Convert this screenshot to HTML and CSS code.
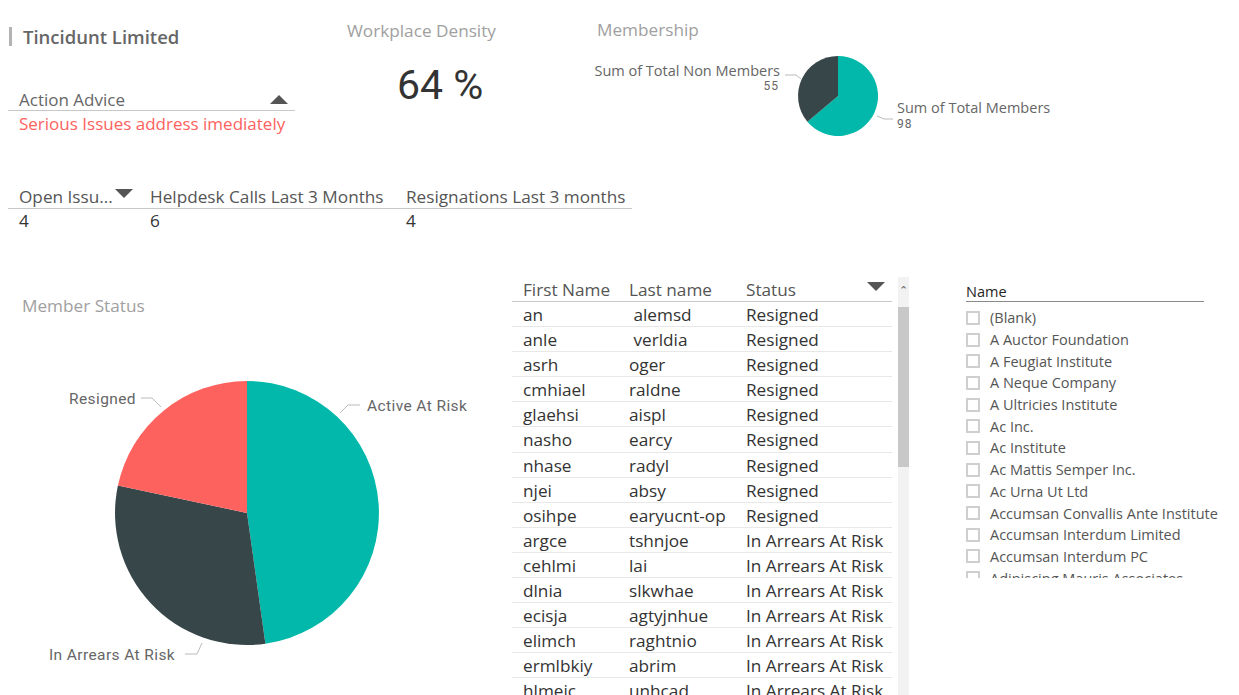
FILE: index.html
```html
<!DOCTYPE html>
<html lang="en">
<head>
    <meta charset="UTF-8">
    <title>Tincidunt Limited - Report</title>
    <link rel="stylesheet" href="styles.css">
</head>
<body>
    <div class="top">
        <div class="company">
            <div class="company-title">Tincidunt Limited</div>
            <div class="advice">
                <div class="advice-head">
                    <span>Action Advice</span>
                    <span class="tri-up"></span>
                </div>
                <div class="advice-value">Serious Issues address imediately</div>
            </div>
        </div>

        <div class="density">
            <div class="visual-title">Workplace Density</div>
            <div class="density-value">64 %</div>
        </div>

        <div class="membership">
            <div class="visual-title">Membership</div>
            <svg class="membership-chart" width="500" height="95" viewBox="0 0 500 95">
                <path d="M258,46 L258,6 A40,40 0 1 1 227.4,71.7 Z" fill="#01b8aa"/>
                <path d="M258,46 L227.4,71.7 A40,40 0 0 1 258,6 Z" fill="#374649"/>
                <polyline points="205,25 216,25 221,29" fill="none" stroke="#bbb" stroke-width="1"/>
                <polyline points="297,66 304,69 313,69" fill="none" stroke="#bbb" stroke-width="1"/>
                <text x="200" y="26" text-anchor="end" class="pie-label">Sum of Total Non Members</text>
                <text x="199" y="40" text-anchor="end" class="pie-num">55</text>
                <text x="317" y="63" class="pie-label">Sum of Total Members</text>
                <text x="317" y="78" class="pie-num">98</text>
            </svg>
        </div>
    </div>

    <div class="kpi">
        <div class="kpi-row kpi-head">
            <div class="kpi-cell first">Open Issu...<span class="tri-down"></span></div>
            <div class="kpi-cell">Helpdesk Calls Last 3 Months</div>
            <div class="kpi-cell">Resignations Last 3 months</div>
        </div>
        <div class="kpi-row kpi-values">
            <div class="kpi-cell first">4</div>
            <div class="kpi-cell">6</div>
            <div class="kpi-cell">4</div>
        </div>
    </div>

    <div class="bottom">
        <div class="status">
            <div class="visual-title">Member Status</div>
            <svg class="status-chart" width="490" height="300" viewBox="0 0 490 300">
                <path d="M247,143 L247,11 A132,132 0 0 1 265.4,273.7 Z" fill="#01b8aa"/>
                <path d="M247,143 L265.4,273.7 A132,132 0 0 1 117.9,115.6 Z" fill="#374649"/>
                <path d="M247,143 L117.9,115.6 A132,132 0 0 1 247,11 Z" fill="#fd625e"/>
                <polyline points="141,28 152,28 161,37" fill="none" stroke="#bbb" stroke-width="1"/>
                <polyline points="340,43 348,35 360,35" fill="none" stroke="#bbb" stroke-width="1"/>
                <polyline points="185,284 197,284 202,273" fill="none" stroke="#bbb" stroke-width="1"/>
                <text x="136" y="34" text-anchor="end" class="status-label">Resigned</text>
                <text x="367" y="41" class="status-label">Active At Risk</text>
                <text x="49" y="290" class="status-label">In Arrears At Risk</text>
            </svg>
        </div>

        <div class="grid">
            <div class="grid-row grid-head">
                <div>First Name</div>
                <div>Last name</div>
                <div class="status-col">Status<span class="tri-down"></span></div>
            </div>
            <div class="grid-row"><div>an</div><div>&nbsp;alemsd</div><div>Resigned</div></div>
            <div class="grid-row"><div>anle</div><div>&nbsp;verldia</div><div>Resigned</div></div>
            <div class="grid-row"><div>asrh</div><div>oger</div><div>Resigned</div></div>
            <div class="grid-row"><div>cmhiael</div><div>raldne</div><div>Resigned</div></div>
            <div class="grid-row"><div>glaehsi</div><div>aispl</div><div>Resigned</div></div>
            <div class="grid-row"><div>nasho</div><div>earcy</div><div>Resigned</div></div>
            <div class="grid-row"><div>nhase</div><div>radyl</div><div>Resigned</div></div>
            <div class="grid-row"><div>njei</div><div>absy</div><div>Resigned</div></div>
            <div class="grid-row"><div>osihpe</div><div>earyucnt-op</div><div>Resigned</div></div>
            <div class="grid-row"><div>argce</div><div>tshnjoe</div><div>In Arrears At Risk</div></div>
            <div class="grid-row"><div>cehlmi</div><div>lai</div><div>In Arrears At Risk</div></div>
            <div class="grid-row"><div>dlnia</div><div>slkwhae</div><div>In Arrears At Risk</div></div>
            <div class="grid-row"><div>ecisja</div><div>agtyjnhue</div><div>In Arrears At Risk</div></div>
            <div class="grid-row"><div>elimch</div><div>raghtnio</div><div>In Arrears At Risk</div></div>
            <div class="grid-row"><div>ermlbkiy</div><div>abrim</div><div>In Arrears At Risk</div></div>
            <div class="grid-row"><div>hlmeic</div><div>unhcad</div><div>In Arrears At Risk</div></div>
        </div>

        <div class="scrollbar">
            <div class="scroll-up">&#8963;</div>
            <div class="scroll-thumb"></div>
        </div>

        <div class="slicer">
            <div class="slicer-head">Name</div>
            <div class="slicer-list">
                <div class="slicer-item"><span class="box"></span>(Blank)</div>
                <div class="slicer-item"><span class="box"></span>A Auctor Foundation</div>
                <div class="slicer-item"><span class="box"></span>A Feugiat Institute</div>
                <div class="slicer-item"><span class="box"></span>A Neque Company</div>
                <div class="slicer-item"><span class="box"></span>A Ultricies Institute</div>
                <div class="slicer-item"><span class="box"></span>Ac Inc.</div>
                <div class="slicer-item"><span class="box"></span>Ac Institute</div>
                <div class="slicer-item"><span class="box"></span>Ac Mattis Semper Inc.</div>
                <div class="slicer-item"><span class="box"></span>Ac Urna Ut Ltd</div>
                <div class="slicer-item"><span class="box"></span>Accumsan Convallis Ante Institute</div>
                <div class="slicer-item"><span class="box"></span>Accumsan Interdum Limited</div>
                <div class="slicer-item"><span class="box"></span>Accumsan Interdum PC</div>
                <div class="slicer-item"><span class="box"></span>Adipiscing Mauris Associates</div>
            </div>
        </div>
    </div>
</body>
</html>
```

FILE: styles.css
```css
* {
    box-sizing: border-box;
}

body {
    margin: 0;
    width: 1239px;
    height: 695px;
    overflow: hidden;
    background-color: #ffffff;
    font-family: "Open Sans", "Noto Sans", sans-serif;
    color: #333333;
}

.top {
    display: flex;
    height: 180px;
}

.visual-title {
    font-size: 17.2px;
    line-height: 22px;
    color: #a0a0a0;
}

/* company card */
.company {
    width: 330px;
    padding-left: 8px;
}

.company-title {
    margin: 27px 0 0 1px;
    padding-left: 11px;
    border-left: 3px solid #b3b3b3;
    font-size: 18.5px;
    font-weight: 600;
    line-height: 19px;
    color: #666666;
}

.advice {
    width: 287px;
    margin-top: 42px;
}

.advice-head {
    display: flex;
    justify-content: space-between;
    align-items: center;
    height: 23px;
    padding: 0 7px 0 11px;
    border-bottom: 1px solid #c8c8c8;
    font-size: 17px;
    color: #666666;
}

.advice-value {
    padding-left: 11px;
    font-size: 17px;
    line-height: 26px;
    color: #fd625e;
}

.tri-up {
    width: 0;
    height: 0;
    border-left: 9px solid transparent;
    border-right: 9px solid transparent;
    border-bottom: 9px solid #555555;
}

.tri-down {
    display: inline-block;
    width: 0;
    height: 0;
    border-left: 9px solid transparent;
    border-right: 9px solid transparent;
    border-top: 9px solid #555555;
}

/* density card */
.density {
    width: 250px;
    padding: 20px 0 0 17px;
}

.density-value {
    margin: 19px 0 0 50px;
    font-family: Roboto, "DejaVu Sans", sans-serif;
    font-size: 41px;
    line-height: 48px;
    color: #333333;
}

/* membership card */
.membership {
    padding-top: 19px;
}

.membership .visual-title {
    padding-left: 17px;
}

.membership-chart {
    display: block;
    margin-top: 9px;
}

.pie-label {
    font-family: "Open Sans", sans-serif;
    font-size: 14.5px;
    fill: #666666;
}

.pie-num {
    font-family: Roboto, sans-serif;
    font-size: 12px;
    letter-spacing: 1px;
    fill: #666666;
}

/* kpi table */
.kpi {
    width: 624px;
    margin: 5px 0 0 8px;
}

.kpi-row {
    display: grid;
    grid-template-columns: 132px 256px 1fr;
    font-size: 17.2px;
}

.kpi-head {
    height: 24px;
    line-height: 24px;
    border-bottom: 1px solid #c8c8c8;
    color: #555555;
}

.kpi-values {
    line-height: 24px;
    color: #333333;
}

.kpi-cell {
    padding-left: 10px;
    white-space: nowrap;
}

.kpi-cell.first {
    padding-left: 11px;
}

.kpi-head .tri-down {
    margin-left: 2px;
    vertical-align: 5px;
}

/* bottom section */
.bottom {
    display: flex;
    margin-top: 44px;
    height: 418px;
}

.status {
    width: 512px;
}

.status .visual-title {
    padding: 18px 0 0 22px;
}

.status-chart {
    display: block;
    margin-top: 53px;
}

.status-label {
    font-family: Roboto, sans-serif;
    font-size: 15.5px;
    letter-spacing: 0.4px;
    fill: #666666;
}

/* table */
.grid {
    width: 380px;
    height: 418px;
    overflow: hidden;
    font-size: 17.2px;
    color: #333333;
}

.grid-row {
    display: grid;
    grid-template-columns: 106px 117px 1fr;
    height: 25.1px;
    line-height: 25px;
    border-bottom: 1px solid #e8e8e8;
    white-space: nowrap;
}

.grid-row div {
    padding-left: 11px;
}

.grid-head {
    height: 25px;
    line-height: 25px;
    border-bottom: 1px solid #c8c8c8;
    color: #555555;
}

.status-col {
    display: flex;
    justify-content: space-between;
    align-items: center;
    padding-right: 7px;
}

.status-col .tri-down {
    margin-top: -6px;
}

.scrollbar {
    width: 11px;
    margin-left: 6px;
    height: 418px;
    background-color: #f2f2f2;
}

.scroll-up {
    height: 30px;
    text-align: center;
    font-size: 11px;
    line-height: 26px;
    color: #666666;
}

.scroll-thumb {
    height: 160px;
    background-color: #c8c8c8;
}

/* name slicer */
.slicer {
    width: 238px;
    margin-left: 57px;
}

.slicer-head {
    padding-top: 6px;
    height: 25px;
    font-size: 14.5px;
    line-height: 18px;
    color: #252423;
    border-bottom: 1px solid #8a8a8a;
}

.slicer-list {
    width: 280px;
    height: 276px;
    padding-top: 5px;
    overflow: hidden;
}

.slicer-item {
    display: flex;
    align-items: center;
    height: 21.7px;
    font-size: 14.5px;
    color: #555555;
    white-space: nowrap;
}

.box {
    flex-shrink: 0;
    width: 14px;
    height: 14px;
    margin-right: 10px;
    border: 2px solid #cfcfcf;
}
```
